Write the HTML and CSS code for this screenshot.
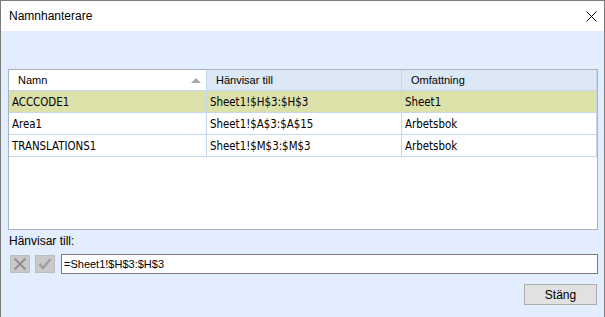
FILE: index.html
```html
<!DOCTYPE html>
<html lang="sv">
<head>
<meta charset="UTF-8">
<title>Namnhanterare</title>
<link rel="stylesheet" href="styles.css">
</head>
<body>

<div class="window">
    <div class="titlebar">
        <span class="title">Namnhanterare</span>
        <svg class="close-x" width="11" height="11" viewBox="0 0 11 11">
            <path d="M0.5 0.5 L10.5 10.5 M10.5 0.5 L0.5 10.5" stroke="#000" stroke-width="1" fill="none"/>
        </svg>
    </div>

    <div class="content">
        <div class="list">
            <div class="grid">
                <div class="th sorted"><span>Namn</span><i class="sort-arrow"></i></div>
                <div class="th">Hänvisar till</div>
                <div class="th">Omfattning</div>

                <div class="td selected">ACCCODE1</div>
                <div class="td selected">Sheet1!$H$3:$H$3</div>
                <div class="td selected">Sheet1</div>

                <div class="td">Area1</div>
                <div class="td">Sheet1!$A$3:$A$15</div>
                <div class="td">Arbetsbok</div>

                <div class="td">TRANSLATIONS1</div>
                <div class="td">Sheet1!$M$3:$M$3</div>
                <div class="td">Arbetsbok</div>
            </div>
        </div>

        <div class="ref-label">Hänvisar till:</div>

        <div class="ref-row">
            <span class="icon-btn">
                <svg width="14" height="14" viewBox="0 0 14 14">
                    <path d="M1.5 1.5 L12.5 12.5 M12.5 1.5 L1.5 12.5" stroke="#8e8e8e" stroke-width="2" fill="none"/>
                </svg>
            </span>
            <span class="icon-btn">
                <svg width="14" height="14" viewBox="0 0 14 14">
                    <path d="M1.5 7 L5 11 L12.5 2" stroke="#a0a0a0" stroke-width="2.6" fill="none"/>
                </svg>
            </span>
            <div class="ref-input">=Sheet1!$H$3:$H$3</div>
        </div>

        <div class="footer">
            <button class="close-btn">Stäng</button>
        </div>
    </div>
</div>

</body>
</html>
```

FILE: styles.css
```css
body {
    margin: 0;
    font-family: "Liberation Sans", Arial, sans-serif;
    color: #000;
}

.window {
    width: 605px;
    height: 317px;
    box-sizing: border-box;
    border: 1px solid #7b7b7b;
    border-bottom: none;
    background: #e2edfd;
    display: flex;
    flex-direction: column;
}

.titlebar {
    height: 30px;
    background: #fff;
    display: flex;
    align-items: center;
    justify-content: space-between;
    padding: 0 7px 0 8px;
}
.title {
    font-size: 12px;
}

.content {
    flex: 1;
    padding: 38px 6px 0 7px;
}

.list {
    height: 161px;
    box-sizing: border-box;
    border: 1px solid #a9b2bd;
    background: #fff;
}
.grid {
    display: grid;
    grid-template-columns: 198px 195px 195px;
    grid-auto-rows: 22px;
    grid-template-rows: 21px;
}
.th, .td {
    box-sizing: border-box;
    border-right: 1px solid #c6d6ec;
    border-bottom: 1px solid #c6d6ec;
    display: flex;
    align-items: center;
    white-space: nowrap;
}
.th {
    background: #dce8f5;
    font-size: 11px;
    padding-left: 9px;
}
.th.sorted {
    background: #fff;
    justify-content: space-between;
    padding-right: 5px;
}
.sort-arrow {
    width: 0;
    height: 0;
    border-left: 5px solid transparent;
    border-right: 5px solid transparent;
    border-bottom: 5px solid #a8a8a8;
}
.td {
    font-family: "DejaVu Sans Condensed", "DejaVu Sans", sans-serif;
    font-stretch: semi-condensed;
    font-size: 11.4px;
    padding-left: 3px;
}
.td.selected {
    background: #dce0a9;
}

.ref-label {
    margin: 4px 0 0 1px;
    font-size: 12px;
    line-height: 15px;
}

.ref-row {
    margin-top: 5px;
    height: 20px;
    display: flex;
    align-items: center;
    padding-left: 2px;
}
.icon-btn {
    width: 20px;
    height: 18px;
    box-sizing: border-box;
    background: #c9c9c9;
    border: 1px solid #bdbdbd;
    display: flex;
    align-items: center;
    justify-content: center;
    margin-right: 5px;
}
.icon-btn + .icon-btn {
    margin-right: 6px;
}
.ref-input {
    flex: 1;
    height: 20px;
    box-sizing: border-box;
    border: 1px solid #7a7a7a;
    background: #fff;
    font-size: 11px;
    line-height: 18px;
    padding-left: 2px;
}

.footer {
    margin-top: 10px;
    display: flex;
    justify-content: flex-end;
}
.close-btn {
    width: 73px;
    height: 21px;
    margin-right: 1px;
    border: 1px solid #adadad;
    background: #e1e1e1;
    font-family: "Liberation Sans", Arial, sans-serif;
    font-size: 12px;
    color: #000;
    padding: 0;
}
```
